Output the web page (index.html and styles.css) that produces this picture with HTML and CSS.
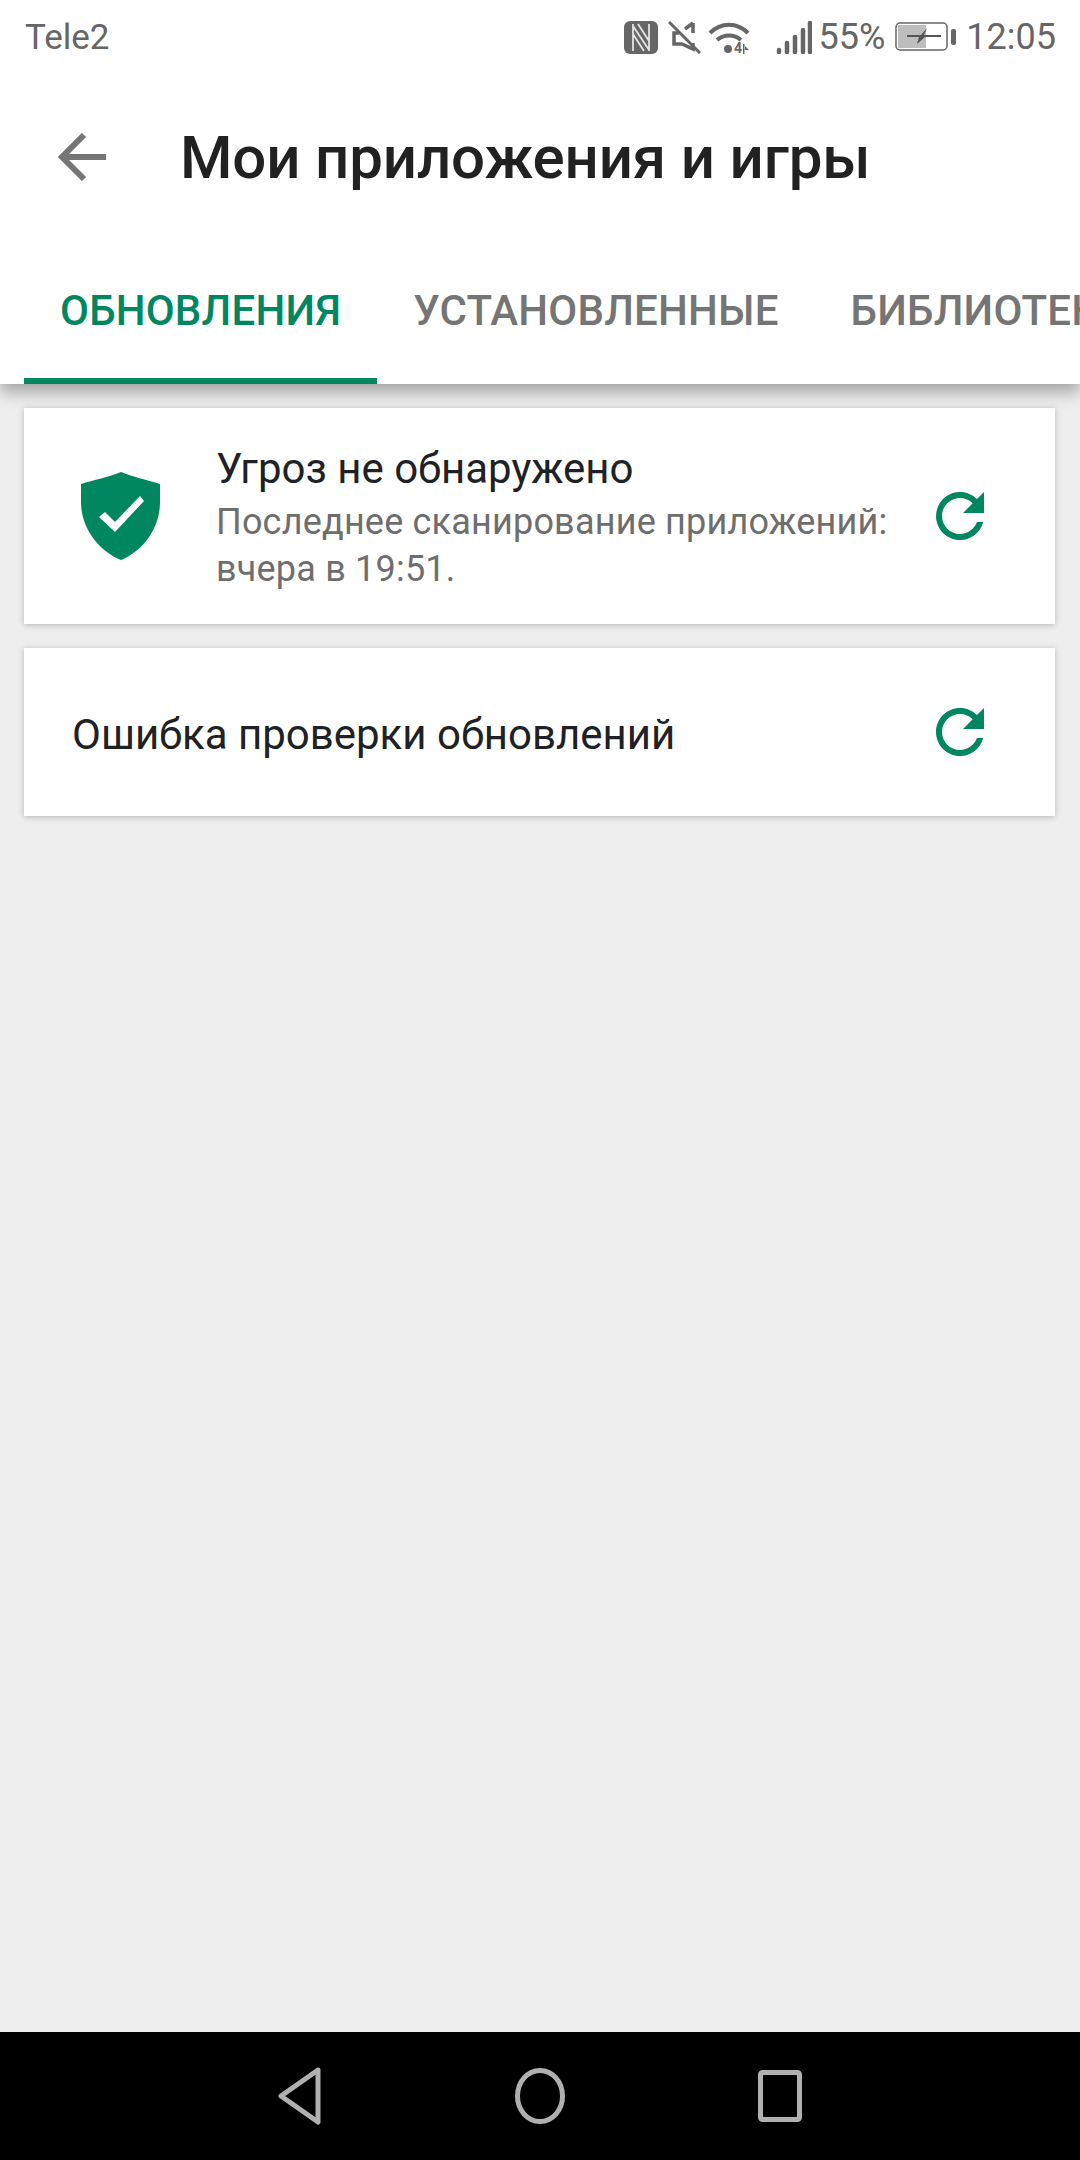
FILE: index.html
```html
<!DOCTYPE html>
<html lang="ru">
<head>
    <meta charset="UTF-8">
    <meta name="viewport" content="width=device-width, initial-scale=1.0">
    <title>Мои приложения и игры</title>
    <link rel="stylesheet" href="styles.css">
</head>
<body>
    <div class="status-bar">
        <span class="carrier">Tele2</span>
        <div class="status-right">
            <svg class="ic-nfc" width="34" height="33" viewBox="0 0 34 33">
                <rect width="34" height="33" rx="6" fill="#666"/>
                <path d="M9 3v27M25 3v27M9 5l16 24M14 3l11 17M20 30L9 13" fill="none" stroke="#e4e4e4" stroke-width="1.8"/>
            </svg>
            <svg class="ic-mute" width="33" height="33" viewBox="0 0 33 33">
                <path d="M25 2v10M25 22v6l-11-5H6V12h5M17 8l8-6" fill="none" stroke="#666" stroke-width="3.5"/>
                <path d="M1 1l31 31" stroke="#666" stroke-width="3"/>
            </svg>
            <svg class="ic-wifi" width="40" height="33" viewBox="0 0 40 33">
                <path d="M1 12c11-11 27-11 38 0M8 19c7-6 17-6 24 0" fill="none" stroke="#666" stroke-width="4"/>
                <circle cx="19" cy="28" r="4" fill="#666"/>
                <text class="ic-wifi-4" x="25" y="32">4</text>
                <path d="M34 23v10h1.5V23zM36 25l4 4-4 0z" fill="#666"/>
            </svg>
            <svg class="ic-signal" width="36" height="33" viewBox="0 0 36 33">
                <path d="M3 31v-2M11 31v-9M19 31v-15M27 31v-22M34 31V2" stroke="#666" stroke-width="4.5" stroke-linecap="round"/>
            </svg>
            <span class="percent">55%</span>
            <svg class="ic-battery" width="61" height="30" viewBox="0 0 61 30">
                <rect x="1" y="1" width="51" height="27" rx="4" fill="none" stroke="#666" stroke-width="1.5"/>
                <rect x="3" y="3" width="28" height="23" fill="#bdbdbd"/>
                <rect x="56" y="7" width="5" height="16" rx="2" fill="#666"/>
                <path d="M12 13h14l6-7-3 7h17v2H30l-8 7 2-7H12z" fill="#555"/>
            </svg>
            <span class="clock">12:05</span>
        </div>
    </div>

    <header class="app-header">
        <div class="toolbar">
            <svg class="back" width="48" height="48" viewBox="0 0 48 48">
                <path d="M48 24H5M26 2L4 24l22 22" fill="none" stroke="#757575" stroke-width="6"/>
            </svg>
            <h1>Мои приложения и игры</h1>
        </div>
        <nav class="tabs">
            <a class="tab active">ОБНОВЛЕНИЯ</a>
            <a class="tab">УСТАНОВЛЕННЫЕ</a>
            <a class="tab">БИБЛИОТЕКА</a>
        </nav>
    </header>

    <main class="content">
        <section class="card card-scan">
            <svg class="shield" width="80" height="88" viewBox="0 0 80 88">
                <path fill="#01875f" fill-rule="evenodd" d="M40 0C52 5 67 8 79 12V30C79 58 60 80 40 88 20 80 0 58 0 30V12C12 8 28 5 40 0ZM18 45l6-5 10 10 25-26 4 5-29 31Z"/>
            </svg>
            <div class="scan-text">
                <h2>Угроз не обнаружено</h2>
                <p>Последнее сканирование приложений: вчера в 19:51.</p>
            </div>
            <svg class="refresh" width="72" height="72" viewBox="0 0 24 24">
                <path fill="#01875f" d="M17.65 6.35C16.2 4.9 14.21 4 12 4c-4.42 0-7.99 3.58-7.99 8s3.57 8 7.99 8c3.73 0 6.84-2.55 7.73-6h-2.08c-.82 2.33-3.04 4-5.65 4-3.31 0-6-2.69-6-6s2.69-6 6-6c1.66 0 3.14.69 4.22 1.78L13 11h7V4l-2.35 2.35z"/>
            </svg>
        </section>
        <section class="card card-error">
            <h2>Ошибка проверки обновлений</h2>
            <svg class="refresh" width="72" height="72" viewBox="0 0 24 24">
                <path fill="#01875f" d="M17.65 6.35C16.2 4.9 14.21 4 12 4c-4.42 0-7.99 3.58-7.99 8s3.57 8 7.99 8c3.73 0 6.84-2.55 7.73-6h-2.08c-.82 2.33-3.04 4-5.65 4-3.31 0-6-2.69-6-6s2.69-6 6-6c1.66 0 3.14.69 4.22 1.78L13 11h7V4l-2.35 2.35z"/>
            </svg>
        </section>
    </main>

    <footer class="nav-bar">
        <svg width="44" height="58" viewBox="0 0 44 58">
            <path d="M40 3L3 29l37 26z" fill="none" stroke="#b0b0b0" stroke-width="5" stroke-linejoin="round"/>
        </svg>
        <svg width="50" height="56" viewBox="0 0 50 56">
            <ellipse cx="25" cy="28" rx="22.5" ry="25.5" fill="none" stroke="#b0b0b0" stroke-width="5"/>
        </svg>
        <svg width="44" height="52" viewBox="0 0 44 52">
            <rect x="2.5" y="2.5" width="39" height="47" rx="2" fill="none" stroke="#b0b0b0" stroke-width="5"/>
        </svg>
    </footer>
</body>
</html>
```

FILE: styles.css
```css
* {
    box-sizing: border-box;
}
html, body {
    height: 100%;
}
body {
    margin: 0;
    height: 2160px;
    overflow: hidden;
    display: flex;
    flex-direction: column;
    font-family: Roboto, "Noto Sans", sans-serif;
    background-color: #eeeeee;
    color: #202124;
}
h1, h2, p {
    margin: 0;
    font-weight: normal;
}

.status-bar {
    height: 74px;
    flex: none;
    position: relative;
    z-index: 2;
    display: flex;
    align-items: center;
    justify-content: space-between;
    padding: 0 24px 0 25px;
    background: white;
    color: #666666;
    font-size: 36px;
}
.carrier {
    font-size: 35px;
}
.status-right {
    display: flex;
    align-items: center;
}
.ic-mute {
    margin-left: 10px;
}
.ic-wifi {
    margin-left: 8px;
    overflow: visible;
}
.ic-wifi-4 {
    font-size: 14px;
    font-weight: 700;
    fill: #666666;
}
.ic-signal {
    margin-left: 27px;
}
.percent {
    margin-left: 7px;
}
.ic-battery {
    margin-left: 10px;
}
.clock {
    margin-left: 10px;
}

.app-header {
    flex: none;
    position: relative;
    z-index: 1;
    background: white;
    box-shadow: 0 8px 16px rgba(0, 0, 0, 0.32);
}
.toolbar {
    height: 166px;
    display: flex;
    align-items: center;
    padding-left: 58px;
}
.back {
    flex: none;
}
h1 {
    margin-left: 74px;
    font-size: 60px;
    font-weight: 500;
    letter-spacing: -0.15px;
    color: #212121;
    white-space: nowrap;
}
.tabs {
    height: 144px;
    padding-left: 24px;
    display: flex;
    overflow: hidden;
}
.tab {
    flex: none;
    padding: 46px 36px 0;
    font-size: 42px;
    font-weight: 500;
    letter-spacing: 0.2px;
    color: #757575;
}
.tab.active {
    color: #01875f;
    border-bottom: 6px solid #01875f;
}

.content {
    flex: 1;
    display: flex;
    flex-direction: column;
    gap: 24px;
    padding: 24px 25px 0 24px;
}
.card {
    display: flex;
    align-items: center;
    background: white;
    box-shadow: 0 1px 6px rgba(0, 0, 0, 0.24);
}
.card-scan {
    height: 216px;
    padding-left: 57px;
}
.card-error {
    height: 168px;
    padding: 4px 0 0 48px;
}
.card-error .refresh {
    margin-top: -4px;
}
.card h2 {
    font-size: 42px;
    color: #202124;
}
.scan-text {
    width: 700px;
    margin-left: 55px;
    padding-top: 5px;
}
.scan-text p {
    margin-top: 6px;
    font-size: 36px;
    line-height: 47px;
    letter-spacing: 0.2px;
    color: #6e6e6e;
}
.refresh {
    flex: none;
    margin-left: auto;
    margin-right: 59px;
}

.nav-bar {
    height: 128px;
    flex: none;
    display: flex;
    align-items: center;
    justify-content: space-between;
    padding: 0 278px;
    background: black;
}
```
